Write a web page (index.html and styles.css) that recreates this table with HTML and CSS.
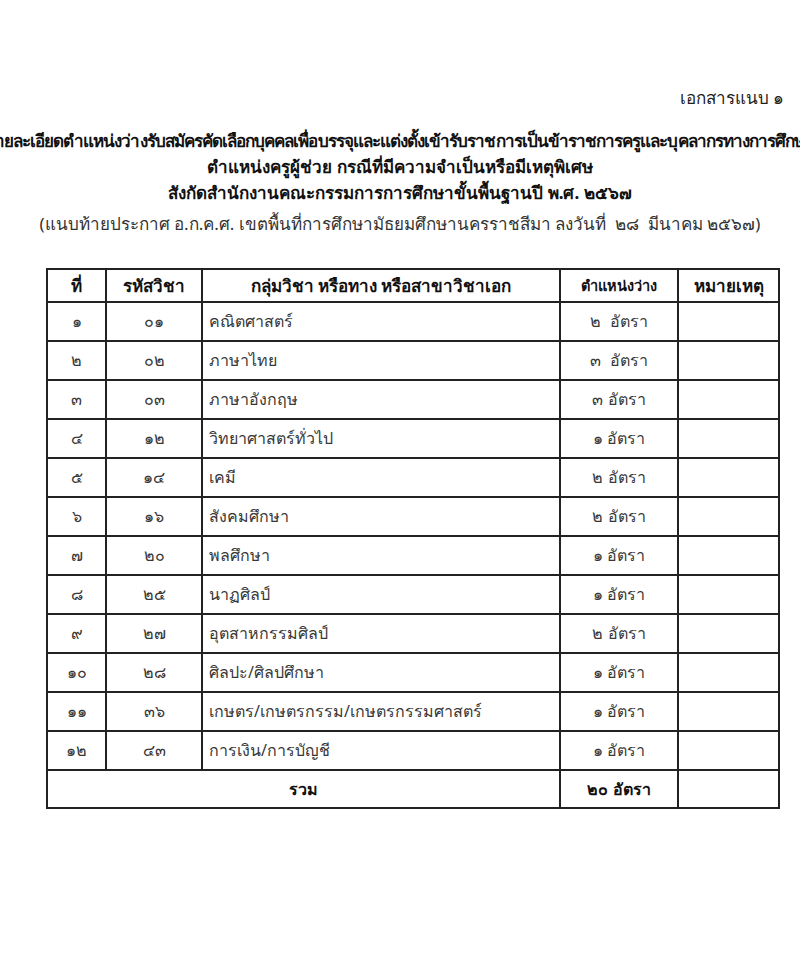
FILE: index.html
```html
<!DOCTYPE html>
<html lang="th">
<head>
<meta charset="utf-8">
<title>เอกสารแนบ ๑</title>
<link rel="stylesheet" href="styles.css">
</head>
<body>
<div class="page">
  <div class="attach">เอกสารแนบ ๑</div>
  <div class="titles">
    <div class="t1"><span>รายละเอียดตำแหน่งว่างรับสมัครคัดเลือกบุคคลเพื่อบรรจุและแต่งตั้งเข้ารับราชการเป็นข้าราชการครูและบุคลากรทางการศึกษา</span></div>
    <div class="t2">ตำแหน่งครูผู้ช่วย กรณีที่มีความจำเป็นหรือมีเหตุพิเศษ</div>
    <div class="t2">สังกัดสำนักงานคณะกรรมการการศึกษาขั้นพื้นฐานปี พ.ศ. ๒๕๖๗</div>
    <div class="t4">(แนบท้ายประกาศ อ.ก.ค.ศ. เขตพื้นที่การศึกษามัธยมศึกษานครราชสีมา ลงวันที่&nbsp; ๒๘&nbsp; มีนาคม ๒๕๖๗)</div>
  </div>
  <table class="grid">
    <colgroup>
      <col class="c1"><col class="c2"><col class="c3"><col class="c4"><col class="c5">
    </colgroup>
    <thead>
      <tr><th>ที่</th><th>รหัสวิชา</th><th>กลุ่มวิชา หรือทาง หรือสาขาวิชาเอก</th><th class="sm">ตำแหน่งว่าง</th><th>หมายเหตุ</th></tr>
    </thead>
    <tbody>
      <tr><td>๑</td><td>๐๑</td><td class="l">คณิตศาสตร์</td><td>๒&nbsp; อัตรา</td><td></td></tr>
      <tr><td>๒</td><td>๐๒</td><td class="l">ภาษาไทย</td><td>๓&nbsp; อัตรา</td><td></td></tr>
      <tr><td>๓</td><td>๐๓</td><td class="l">ภาษาอังกฤษ</td><td>๓ อัตรา</td><td></td></tr>
      <tr><td>๔</td><td>๑๒</td><td class="l">วิทยาศาสตร์ทั่วไป</td><td>๑ อัตรา</td><td></td></tr>
      <tr><td>๕</td><td>๑๔</td><td class="l">เคมี</td><td>๒ อัตรา</td><td></td></tr>
      <tr><td>๖</td><td>๑๖</td><td class="l">สังคมศึกษา</td><td>๒ อัตรา</td><td></td></tr>
      <tr><td>๗</td><td>๒๐</td><td class="l">พลศึกษา</td><td>๑ อัตรา</td><td></td></tr>
      <tr><td>๘</td><td>๒๕</td><td class="l">นาฏศิลป์</td><td>๑ อัตรา</td><td></td></tr>
      <tr><td>๙</td><td>๒๗</td><td class="l">อุตสาหกรรมศิลป์</td><td>๒ อัตรา</td><td></td></tr>
      <tr><td>๑๐</td><td>๒๘</td><td class="l">ศิลปะ/ศิลปศึกษา</td><td>๑ อัตรา</td><td></td></tr>
      <tr><td>๑๑</td><td>๓๖</td><td class="l">เกษตร/เกษตรกรรม/เกษตรกรรมศาสตร์</td><td>๑ อัตรา</td><td></td></tr>
      <tr><td>๑๒</td><td>๔๓</td><td class="l">การเงิน/การบัญชี</td><td>๑ อัตรา</td><td></td></tr>
      <tr class="total"><td colspan="3">รวม</td><td>๒๐ อัตรา</td><td></td></tr>
    </tbody>
  </table>
</div>
</body>
</html>
```
FILE: styles.css
```css
html, body {
  margin: 0;
  padding: 0;
  background: #ffffff;
  overflow: hidden;
}
body {
  font-family: "Noto Sans", "DejaVu Sans", sans-serif;
  color: #222;
}
.page {
  width: 800px;
  height: 971px;
  padding-top: 86px;
  box-sizing: border-box;
  overflow: hidden;
}
.attach {
  text-align: right;
  padding-right: 16px;
  font-size: 17px;
  line-height: 24px;
  color: #222;
}
.titles {
  margin-top: 18px;
  text-align: center;
}
.t1 {
  display: flex;
  justify-content: center;
  white-space: nowrap;
  font-size: 17px;
  font-weight: bold;
  letter-spacing: -0.95px;
  line-height: 25px;
  color: #111;
}
.t2 {
  font-size: 17px;
  font-weight: bold;
  line-height: 25px;
  margin-top: 1px;
  color: #111;
}
.t4 {
  font-size: 17px;
  line-height: 28px;
  margin-top: 5px;
  color: #333;
  white-space: nowrap;
}
.grid {
  margin: 30px 0 0 46px;
  border-collapse: collapse;
  table-layout: fixed;
  width: 732px;
  border: 2px solid #222;
}
.c1 { width: 59px; }
.c2 { width: 96px; }
.c3 { width: 358px; }
.c4 { width: 118px; }
.c5 { width: 101px; }
.grid th, .grid td {
  border: 2px solid #222;
  padding: 0 6px;
  text-align: center;
  white-space: nowrap;
  overflow: hidden;
}
.grid th {
  height: 31px;
  font-size: 17px;
  font-weight: bold;
  color: #111;
}
.grid th.sm { font-size: 14.5px; }
.grid td {
  height: 37px;
  font-size: 16px;
  color: #383838;
}
.grid td.l { text-align: left; }
.grid tr.total td {
  height: 36px;
  font-weight: bold;
  color: #111;
}
```
